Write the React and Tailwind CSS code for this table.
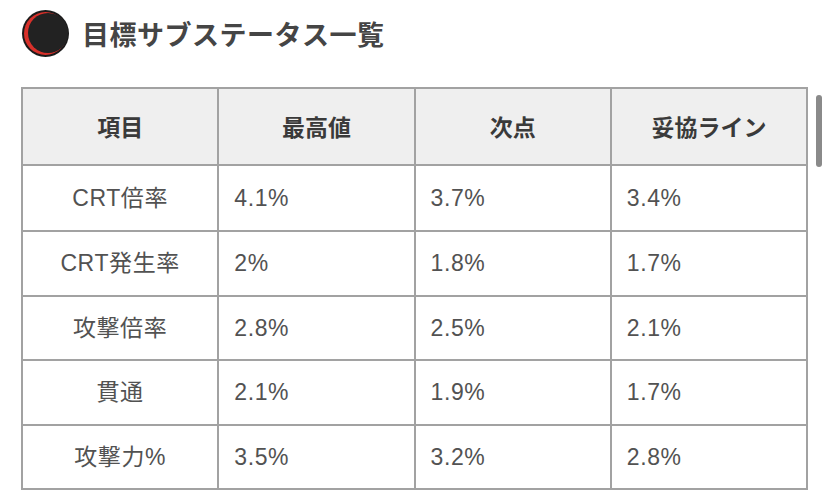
export default function App() {
  const rows = [
    ["CRT倍率", "4.1%", "3.7%", "3.4%"],
    ["CRT発生率", "2%", "1.8%", "1.7%"],
    ["攻撃倍率", "2.8%", "2.5%", "2.1%"],
    ["貫通", "2.1%", "1.9%", "1.7%"],
    ["攻撃力%", "3.5%", "3.2%", "2.8%"],
  ];
  const heads = ["項目", "最高値", "次点", "妥協ライン"];

  return (
    <div
      className="relative h-[504px] w-[828px] overflow-hidden bg-white"
      style={{ fontFamily: '"Noto Sans CJK JP", "Noto Sans", sans-serif' }}
    >
      {/* heading */}
      <div className="flex items-center gap-[12px] pl-[21px] pt-[9px]">
        <svg width="49" height="49" viewBox="0 0 49 49">
          <circle cx="24.5" cy="24.5" r="23.5" fill="#1b1b1b" />
          <circle cx="24.5" cy="24.5" r="21.5" fill="#d8302a" />
          <circle cx="27" cy="24" r="20" fill="#222222" />
        </svg>
        <h2 className="text-[27px] font-bold leading-none tracking-[0.5px] text-[#454545]">
          目標サブステータス一覧
        </h2>
      </div>

      {/* table */}
      <table className="ml-[21px] mt-[29px] w-[787px] table-fixed border-collapse">
        <thead>
          <tr className="h-[77px] bg-[#efefef]">
            {heads.map((h) => (
              <th
                key={h}
                className="border-2 border-[#a2a2a2] text-center text-[23px] font-bold text-[#3a3a3a]"
              >
                {h}
              </th>
            ))}
          </tr>
        </thead>
        <tbody
          style={{ fontFamily: '"Liberation Sans", "Noto Sans CJK JP", sans-serif' }}
        >
          {rows.map((r, i) => (
            <tr key={i} className={i === 0 ? "h-[66px]" : "h-[64.5px]"}>
              {r.map((c, j) => (
                <td
                  key={j}
                  className={
                    "border-2 border-[#a2a2a2] text-[23px] font-normal tracking-[0.6px] text-[#525252] " +
                    (j === 0 ? "text-center" : "pl-[15px] text-left")
                  }
                >
                  {c}
                </td>
              ))}
            </tr>
          ))}
        </tbody>
      </table>

      {/* scrollbar */}
      <div className="absolute left-[816px] top-[95px] h-[72px] w-[6px] rounded-full bg-[#8a8a8a]" />
    </div>
  );
}
